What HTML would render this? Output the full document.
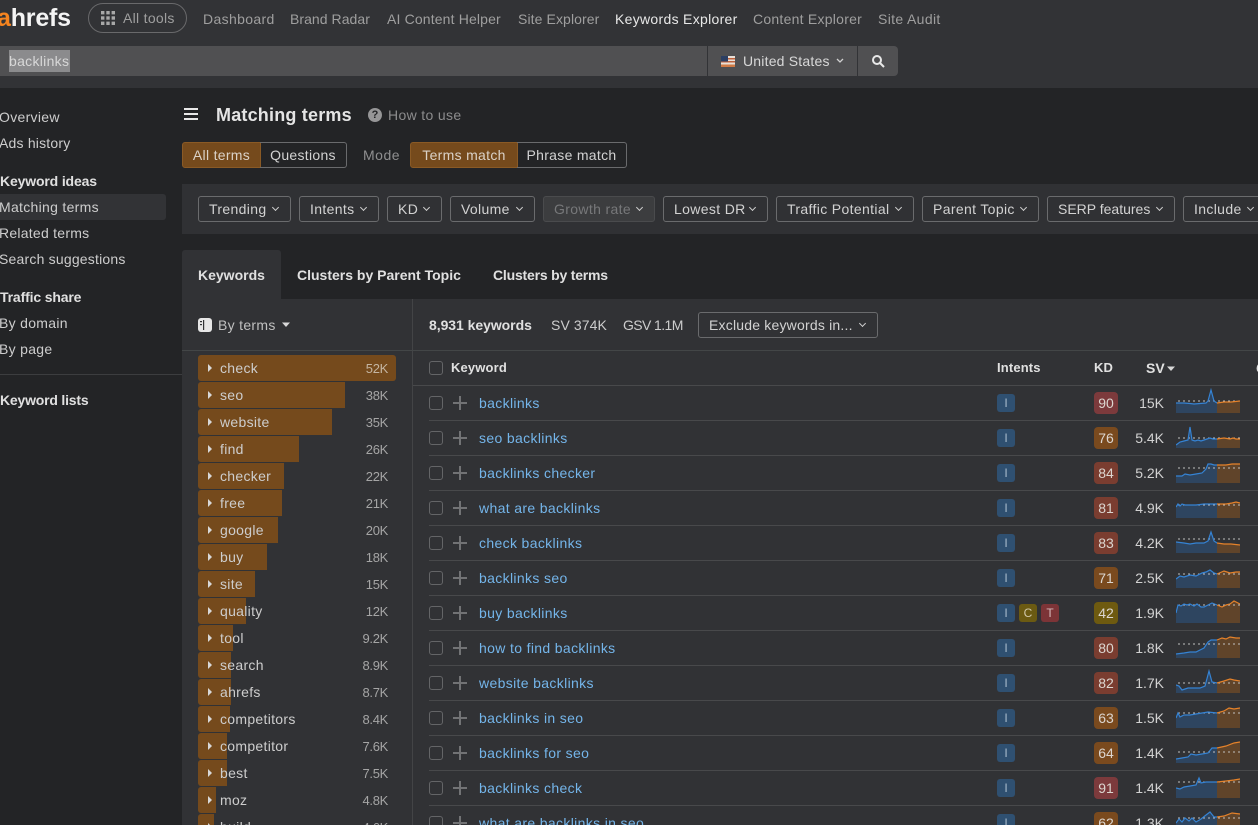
<!DOCTYPE html>
<html><head><meta charset="utf-8"><style>
html,body{margin:0;padding:0;background:#232426}
#p{position:relative;width:1258px;height:825px;overflow:hidden;background:#232426;font:14px/20px "Liberation Sans",sans-serif;letter-spacing:.3px;color:#cdcdcd}
#p div,#p svg,#p span.a{position:absolute}
.t{white-space:nowrap;height:20px}
.g{color:#9f9f9f}
.b{font-weight:700;color:#e0e0e0;letter-spacing:0}
.sb{letter-spacing:-.15px}
.h{font-size:13px;letter-spacing:.15px}
.btn{box-sizing:border-box;height:26px;top:196px;border:1px solid #6a6b6d;border-radius:3px;white-space:nowrap;padding-left:10px;line-height:24px;color:#d2d2d2;letter-spacing:.35px}
.btn:after{content:"";position:absolute;right:12px;top:8px;width:4px;height:4px;border-right:1.3px solid #cfcfcf;border-bottom:1.3px solid #cfcfcf;transform:rotate(45deg)}
.seg{box-sizing:border-box;height:26px;top:142px;border:1px solid #6a6b6d;line-height:24px;text-align:center;color:#d2d2d2}
.on{background:#754a1c;border-color:#8a5a25;color:#dad2c8}
.bar{left:198px;height:26px;background:#754a1c;border-radius:3px 0 0 3px}
.tri{left:208px;width:0;height:0;border-left:4px solid #d8d8d8;border-top:4px solid transparent;border-bottom:4px solid transparent}
.v{left:340px;width:48px;text-align:right;color:#a5a5a5;font-size:13px;letter-spacing:-.3px}
.line{left:429px;right:0;height:1px;background:#48494b}
.cb{left:429px;width:12px;height:12px;border:1.5px solid #646567;border-radius:3px}
.pl{left:453px;width:14px;height:14px;fill:#727375}
.lk{left:479px;color:#74b5ea;letter-spacing:.35px}
.ib{width:18px;height:18px;border-radius:3px;background:#2f5071;color:#a9bccd;text-align:center;line-height:18px;font-size:12px;letter-spacing:0}
.kd{left:1094px;width:24px;height:22px;border-radius:4px;text-align:center;line-height:22px;color:#dcd6d0;letter-spacing:0}
.sv{left:1110px;width:54px;text-align:right;color:#d2d2d2;letter-spacing:0}
.sp{left:1176px;width:64px;height:35px}
.r{background:#7c3a3c}.ro{background:#7a3d30}.o{background:#7a4a1e}.y{background:#6e5a10}
.sp path:nth-child(1){fill:#2e4560}
.sp path:nth-child(2){fill:#60442a}
</style></head><body><div id="p">

<div style="left:0;top:0;width:1258px;height:88px;background:#323336"></div>
<div class="t" style="left:-3px;top:4px;height:28px;font:700 25px/28px 'Liberation Sans',sans-serif;letter-spacing:-.2px;color:#f4f4f4"><span style="color:#f5841f">a</span>hrefs</div>
<div style="left:88px;top:3px;width:97px;height:28px;border:1px solid #69696b;border-radius:15px"></div>
<svg style="left:101px;top:11px" width="14" height="14" fill="#a8a8a8"><rect x="0" y="0" width="3.4" height="3.4"/><rect x="5.3" y="0" width="3.4" height="3.4"/><rect x="10.6" y="0" width="3.4" height="3.4"/><rect x="0" y="5.3" width="3.4" height="3.4"/><rect x="5.3" y="5.3" width="3.4" height="3.4"/><rect x="10.6" y="5.3" width="3.4" height="3.4"/><rect x="0" y="10.6" width="3.4" height="3.4"/><rect x="5.3" y="10.6" width="3.4" height="3.4"/><rect x="10.6" y="10.6" width="3.4" height="3.4"/></svg>
<div class="t g" style="left:123px;top:8px">All tools</div>
<div class="t g" style="left:203px;top:9px;letter-spacing:.35px">Dashboard</div>
<div class="t g" style="left:290px;top:9px;letter-spacing:.05px">Brand Radar</div>
<div class="t g" style="left:387px;top:9px;letter-spacing:.15px">AI Content Helper</div>
<div class="t g" style="left:518px;top:9px;letter-spacing:.1px">Site Explorer</div>
<div class="t" style="left:615px;top:9px;color:#e8e8e8;letter-spacing:.3px">Keywords Explorer</div>
<div class="t g" style="left:753px;top:9px;letter-spacing:.25px">Content Explorer</div>
<div class="t g" style="left:878px;top:9px;letter-spacing:.35px">Site Audit</div>

<div style="left:0;top:46px;width:707px;height:30px;background:#505052"></div>
<div style="left:708px;top:46px;width:149px;height:30px;background:#505052"></div>
<div style="left:858px;top:46px;width:40px;height:30px;background:#505052;border-radius:0 4px 4px 0"></div>
<div style="left:9px;top:50px;width:61px;height:22px;background:#8b8b8d"></div>
<div class="t" style="left:9px;top:51px;color:#d8d8d8;letter-spacing:.3px">backlinks</div>
<svg style="left:721px;top:56px" width="14" height="11"><rect width="14" height="11" fill="#e8e0d8"/><rect y="2" width="14" height="1.5" fill="#c0623c"/><rect y="5" width="14" height="1.5" fill="#c0623c"/><rect y="8.5" width="14" height="2.5" fill="#d07a45"/><rect width="7" height="5.5" fill="#2c3f63"/></svg>
<div class="t" style="left:743px;top:51px;color:#d8d8d8;letter-spacing:.2px">United States</div>
<svg style="left:835px;top:57px" width="10" height="8" fill="none" stroke="#d0d0d0" stroke-width="1.3"><path d="M2 2l3 3 3-3"/></svg>
<svg style="left:871px;top:54px" width="14" height="14" fill="none" stroke="#e8e8e8" stroke-width="2"><circle cx="6" cy="6" r="4"/><path d="M9 9l4 4"/></svg>

<div class="t" style="left:-1px;top:107px">Overview</div>
<div class="t" style="left:-1px;top:133px;letter-spacing:.2px">Ads history</div>
<div class="t b sb" style="left:0;top:171px">Keyword ideas</div>
<div style="left:0;top:194px;width:166px;height:26px;background:#323336;border-radius:0 3px 3px 0"></div>
<div class="t" style="left:-1px;top:197px">Matching terms</div>
<div class="t" style="left:-1px;top:223px;letter-spacing:.25px">Related terms</div>
<div class="t" style="left:-1px;top:249px;letter-spacing:.2px">Search suggestions</div>
<div class="t b sb" style="left:0;top:287px">Traffic share</div>
<div class="t" style="left:-1px;top:313px">By domain</div>
<div class="t" style="left:-1px;top:339px">By page</div>
<div style="left:0;top:374px;width:182px;height:1px;background:#3c3d3f"></div>
<div class="t b" style="left:0;top:390px;letter-spacing:-.2px">Keyword lists</div>

<svg style="left:184px;top:108px" width="14" height="12" fill="#e8e8e8"><rect width="14" height="2" y="0"/><rect width="14" height="2" y="5"/><rect width="14" height="2" y="10"/></svg>
<div class="t" style="left:216px;top:104px;height:22px;font:700 18px/22px 'Liberation Sans',sans-serif;letter-spacing:.2px;color:#e4e4e4">Matching terms</div>
<div style="left:368px;top:108px;width:14px;height:14px;border-radius:50%;background:#969697;color:#232426;font:700 11px/14px 'Liberation Sans',sans-serif;text-align:center;letter-spacing:0">?</div>
<div class="t" style="left:388px;top:105px;color:#8c8c8d;letter-spacing:.35px">How to use</div>

<div class="seg on" style="left:182px;width:79px;border-radius:3px 0 0 3px">All terms</div>
<div class="seg" style="left:260px;width:87px;border-radius:0 3px 3px 0;border-left:0">Questions</div>
<div class="t" style="left:363px;top:145px;color:#8f8f90;letter-spacing:.5px">Mode</div>
<div class="seg on" style="left:410px;width:108px;border-radius:3px 0 0 3px">Terms match</div>
<div class="seg" style="left:517px;width:110px;border-radius:0 3px 3px 0;border-left:0">Phrase match</div>

<div style="left:182px;top:184px;width:1076px;height:50px;background:#303134"></div>
<div class="btn" style="left:198px;width:93px">Trending</div>
<div class="btn" style="left:299px;width:80px">Intents</div>
<div class="btn" style="left:387px;width:55px">KD</div>
<div class="btn" style="left:450px;width:85px">Volume</div>
<div class="btn" style="left:543px;width:112px;background:#3c3d3f;border-color:#4a4b4d;color:#77787a">Growth rate</div>
<div class="btn" style="left:663px;width:105px">Lowest DR</div>
<div class="btn" style="left:776px;width:138px">Traffic Potential</div>
<div class="btn" style="left:922px;width:117px">Parent Topic</div>
<div class="btn" style="left:1047px;width:128px;letter-spacing:0">SERP features</div>
<div class="btn" style="left:1183px;width:83px">Include</div>

<div style="left:182px;top:250px;width:99px;height:49px;background:#313235;border-radius:3px 3px 0 0"></div>
<div style="left:182px;top:299px;width:1076px;height:526px;background:#313235"></div>
<div class="t b" style="left:198px;top:265px">Keywords</div>
<div class="t b" style="left:297px;top:265px">Clusters by Parent Topic</div>
<div class="t b" style="left:493px;top:265px;letter-spacing:-.2px">Clusters by terms</div>
<div style="left:412px;top:299px;width:1px;height:526px;background:#434446"></div>
<div style="left:182px;top:350px;width:1076px;height:1px;background:#434647"></div>

<svg style="left:198px;top:318px" width="14" height="14"><rect width="14" height="14" rx="3" fill="#e6e6e6"/><rect x="5" y="2" width="1.2" height="10" fill="#313235"/><rect x="2" y="3" width="2" height="1.2" fill="#313235"/><rect x="2" y="6" width="2" height="1.2" fill="#313235"/></svg>
<div class="t" style="left:218px;top:315px;color:#c0c0c0">By terms</div>
<svg style="left:282px;top:322px" width="8" height="6" fill="#d8d8d8"><path d="M0 .5h8L4 5z"/></svg>

<div class="t b" style="left:429px;top:315px;letter-spacing:-.05px">8,931 keywords</div>
<div class="t" style="left:551px;top:315px;letter-spacing:.1px">SV 374K</div>
<div class="t" style="left:623px;top:315px;letter-spacing:-.6px">GSV 1.1M</div>
<div class="btn" style="left:698px;top:312px;width:180px;padding-left:10px;letter-spacing:.2px">Exclude keywords in...</div>

<div class="cb" style="top:361px"></div>
<div class="t b h" style="left:451px;top:358px">Keyword</div>
<div class="t b h" style="left:997px;top:358px">Intents</div>
<div class="t b h" style="left:1094px;top:358px">KD</div>
<div class="t b" style="left:1146px;top:358px">SV</div>
<svg style="left:1167px;top:366px" width="8" height="6" fill="#d8d8d8"><path d="M0 .5h8L4 5z"/></svg>
<div class="t b" style="left:1256px;top:358px">C</div>
<div style="left:413px;top:385px;width:845px;height:1px;background:#48494b"></div>

<!-- terms -->
<div class="bar" style="top:355px;width:198px;border-radius:3px"></div>
<div class="bar" style="top:382px;width:147px"></div>
<div class="bar" style="top:409px;width:134px"></div>
<div class="bar" style="top:436px;width:101px"></div>
<div class="bar" style="top:463px;width:86px"></div>
<div class="bar" style="top:490px;width:84px"></div>
<div class="bar" style="top:517px;width:80px"></div>
<div class="bar" style="top:544px;width:69px"></div>
<div class="bar" style="top:571px;width:57px"></div>
<div class="bar" style="top:598px;width:48px"></div>
<div class="bar" style="top:625px;width:35px"></div>
<div class="bar" style="top:652px;width:33px"></div>
<div class="bar" style="top:679px;width:33px"></div>
<div class="bar" style="top:706px;width:32px"></div>
<div class="bar" style="top:733px;width:29px"></div>
<div class="bar" style="top:760px;width:29px"></div>
<div class="bar" style="top:787px;width:18px"></div>
<div class="bar" style="top:814px;width:16px"></div>
<div class="tri" style="top:364px"></div><div class="t" style="left:220px;top:358px">check</div><div class="t v" style="top:359px;color:#c4b5a2">52K</div>
<div class="tri" style="top:391px"></div><div class="t" style="left:220px;top:385px">seo</div><div class="t v" style="top:386px">38K</div>
<div class="tri" style="top:418px"></div><div class="t" style="left:220px;top:412px">website</div><div class="t v" style="top:413px">35K</div>
<div class="tri" style="top:445px"></div><div class="t" style="left:220px;top:439px">find</div><div class="t v" style="top:440px">26K</div>
<div class="tri" style="top:472px"></div><div class="t" style="left:220px;top:466px">checker</div><div class="t v" style="top:467px">22K</div>
<div class="tri" style="top:499px"></div><div class="t" style="left:220px;top:493px">free</div><div class="t v" style="top:494px">21K</div>
<div class="tri" style="top:526px"></div><div class="t" style="left:220px;top:520px">google</div><div class="t v" style="top:521px">20K</div>
<div class="tri" style="top:553px"></div><div class="t" style="left:220px;top:547px">buy</div><div class="t v" style="top:548px">18K</div>
<div class="tri" style="top:580px"></div><div class="t" style="left:220px;top:574px">site</div><div class="t v" style="top:575px">15K</div>
<div class="tri" style="top:607px"></div><div class="t" style="left:220px;top:601px">quality</div><div class="t v" style="top:602px">12K</div>
<div class="tri" style="top:634px"></div><div class="t" style="left:220px;top:628px">tool</div><div class="t v" style="top:629px">9.2K</div>
<div class="tri" style="top:661px"></div><div class="t" style="left:220px;top:655px">search</div><div class="t v" style="top:656px">8.9K</div>
<div class="tri" style="top:688px"></div><div class="t" style="left:220px;top:682px">ahrefs</div><div class="t v" style="top:683px">8.7K</div>
<div class="tri" style="top:715px"></div><div class="t" style="left:220px;top:709px">competitors</div><div class="t v" style="top:710px">8.4K</div>
<div class="tri" style="top:742px"></div><div class="t" style="left:220px;top:736px">competitor</div><div class="t v" style="top:737px">7.6K</div>
<div class="tri" style="top:769px"></div><div class="t" style="left:220px;top:763px">best</div><div class="t v" style="top:764px">7.5K</div>
<div class="tri" style="top:796px"></div><div class="t" style="left:220px;top:790px">moz</div><div class="t v" style="top:791px">4.8K</div>
<div class="tri" style="top:823px"></div><div class="t" style="left:220px;top:817px">build</div><div class="t v" style="top:818px">4.6K</div>

<!-- rows -->
<div class="line" style="top:420px"></div><div class="line" style="top:455px"></div><div class="line" style="top:490px"></div><div class="line" style="top:525px"></div><div class="line" style="top:560px"></div><div class="line" style="top:595px"></div><div class="line" style="top:630px"></div><div class="line" style="top:665px"></div><div class="line" style="top:700px"></div><div class="line" style="top:735px"></div><div class="line" style="top:770px"></div><div class="line" style="top:805px"></div>

<div class="cb" style="top:396px"></div><svg class="pl" style="top:396px"><path d="M6 0h2v6h6v2H8v6H6V8H0V6h6z"/></svg><div class="t lk" style="top:393px">backlinks</div><div class="ib" style="left:997px;top:394px">I</div><div class="kd r" style="top:392px">90</div><div class="t sv" style="top:393px">15K</div>
<svg class="sp" style="top:385px"><path d="M0 28V18L8 18 14 18.500 18 19 24 18.500 30 18 32 16 35 5 38 16 41 18V28Z"/><path d="M41 28V18L48 17 55 17 64 16V28Z"/><path d="M2 16H64" stroke="#c0c0c0" stroke-dasharray="2 3" fill="none"/><path d="M0 18L8 18 14 18.500 18 19 24 18.500 30 18 32 16 35 5 38 16 41 18" fill="none" stroke="#3583d4" stroke-width="1.2"/><path d="M41 18L48 17 55 17 64 16" fill="none" stroke="#e5822a" stroke-width="1.2"/></svg>

<div class="cb" style="top:431px"></div><svg class="pl" style="top:431px"><path d="M6 0h2v6h6v2H8v6H6V8H0V6h6z"/></svg><div class="t lk" style="top:428px">seo backlinks</div><div class="ib" style="left:997px;top:429px">I</div><div class="kd o" style="top:427px">76</div><div class="t sv" style="top:428px">5.4K</div>
<svg class="sp" style="top:420px"><path d="M0 28V25L4 22 8 21 12 20 14 7 16 20 19 21 22 20 25 21 28 20 31 19 34 18 37 19 41 19V28Z"/><path d="M41 28V19L48 18 54 19 57 18 60 19 64 19V28Z"/><path d="M2 18H64" stroke="#c0c0c0" stroke-dasharray="2 3" fill="none"/><path d="M0 25L4 22 8 21 12 20 14 7 16 20 19 21 22 20 25 21 28 20 31 19 34 18 37 19 41 19" fill="none" stroke="#3583d4" stroke-width="1.2"/><path d="M41 19L48 18 54 19 57 18 60 19 64 19" fill="none" stroke="#e5822a" stroke-width="1.2"/></svg>

<div class="cb" style="top:466px"></div><svg class="pl" style="top:466px"><path d="M6 0h2v6h6v2H8v6H6V8H0V6h6z"/></svg><div class="t lk" style="top:463px">backlinks checker</div><div class="ib" style="left:997px;top:464px">I</div><div class="kd ro" style="top:462px">84</div><div class="t sv" style="top:463px">5.2K</div>
<svg class="sp" style="top:455px"><path d="M0 28V21L6 21 9 19 14 20 20 19 26 18 30 14 32 9 35 9 38 10 41 10V28Z"/><path d="M41 28V10L50 10 56 9 64 9V28Z"/><path d="M2 13H64" stroke="#c0c0c0" stroke-dasharray="2 3" fill="none"/><path d="M0 21L6 21 9 19 14 20 20 19 26 18 30 14 32 9 35 9 38 10 41 10" fill="none" stroke="#3583d4" stroke-width="1.2"/><path d="M41 10L50 10 56 9 64 9" fill="none" stroke="#e5822a" stroke-width="1.2"/></svg>

<div class="cb" style="top:501px"></div><svg class="pl" style="top:501px"><path d="M6 0h2v6h6v2H8v6H6V8H0V6h6z"/></svg><div class="t lk" style="top:498px">what are backlinks</div><div class="ib" style="left:997px;top:499px">I</div><div class="kd ro" style="top:497px">81</div><div class="t sv" style="top:498px">4.9K</div>
<svg class="sp" style="top:490px"><path d="M0 28V17L2 14 4 16 6 14 9 15 14 15 20 15 28 14 34 14 41 14V28Z"/><path d="M41 28V14L50 14 56 13 60 12 64 13V28Z"/><path d="M2 15H64" stroke="#c0c0c0" stroke-dasharray="2 3" fill="none"/><path d="M0 17L2 14 4 16 6 14 9 15 14 15 20 15 28 14 34 14 41 14" fill="none" stroke="#3583d4" stroke-width="1.2"/><path d="M41 14L50 14 56 13 60 12 64 13" fill="none" stroke="#e5822a" stroke-width="1.2"/></svg>

<div class="cb" style="top:536px"></div><svg class="pl" style="top:536px"><path d="M6 0h2v6h6v2H8v6H6V8H0V6h6z"/></svg><div class="t lk" style="top:533px">check backlinks</div><div class="ib" style="left:997px;top:534px">I</div><div class="kd ro" style="top:532px">83</div><div class="t sv" style="top:533px">4.2K</div>
<svg class="sp" style="top:525px"><path d="M0 28V17L8 18 14 19 20 18 28 18 32 16 35 7 38 16 41 18V28Z"/><path d="M41 28V18L48 19 55 19 64 20V28Z"/><path d="M2 14H64" stroke="#c0c0c0" stroke-dasharray="2 3" fill="none"/><path d="M0 17L8 18 14 19 20 18 28 18 32 16 35 7 38 16 41 18" fill="none" stroke="#3583d4" stroke-width="1.2"/><path d="M41 18L48 19 55 19 64 20" fill="none" stroke="#e5822a" stroke-width="1.2"/></svg>

<div class="cb" style="top:571px"></div><svg class="pl" style="top:571px"><path d="M6 0h2v6h6v2H8v6H6V8H0V6h6z"/></svg><div class="t lk" style="top:568px">backlinks seo</div><div class="ib" style="left:997px;top:569px">I</div><div class="kd o" style="top:567px">71</div><div class="t sv" style="top:568px">2.5K</div>
<svg class="sp" style="top:560px"><path d="M0 28V19L4 16 8 17 14 15 20 16 26 13 30 12 34 10 38 13 41 14V28Z"/><path d="M41 28V14L48 11 54 13 60 12 64 12V28Z"/><path d="M2 14H64" stroke="#c0c0c0" stroke-dasharray="2 3" fill="none"/><path d="M0 19L4 16 8 17 14 15 20 16 26 13 30 12 34 10 38 13 41 14" fill="none" stroke="#3583d4" stroke-width="1.2"/><path d="M41 14L48 11 54 13 60 12 64 12" fill="none" stroke="#e5822a" stroke-width="1.2"/></svg>

<div class="cb" style="top:606px"></div><svg class="pl" style="top:606px"><path d="M6 0h2v6h6v2H8v6H6V8H0V6h6z"/></svg><div class="t lk" style="top:603px">buy backlinks</div><div class="ib" style="left:997px;top:604px">I</div><div class="ib" style="left:1019px;top:604px;background:#6b5a12;color:#cfc7a8">C</div><div class="ib" style="left:1041px;top:604px;background:#7c3437;color:#d5b9ba">T</div><div class="kd y" style="top:602px">42</div><div class="t sv" style="top:603px">1.9K</div>
<svg class="sp" style="top:595px"><path d="M0 28V18L2 10 5 11 8 9 11 10 14 9 18 11 21 9 25 12 28 12 32 10 36 8 41 10V28Z"/><path d="M41 28V10L46 12 50 10 54 9 58 6 62 8 64 9V28Z"/><path d="M2 10H64" stroke="#c0c0c0" stroke-dasharray="2 3" fill="none"/><path d="M0 18L2 10 5 11 8 9 11 10 14 9 18 11 21 9 25 12 28 12 32 10 36 8 41 10" fill="none" stroke="#3583d4" stroke-width="1.2"/><path d="M41 10L46 12 50 10 54 9 58 6 62 8 64 9" fill="none" stroke="#e5822a" stroke-width="1.2"/></svg>

<div class="cb" style="top:641px"></div><svg class="pl" style="top:641px"><path d="M6 0h2v6h6v2H8v6H6V8H0V6h6z"/></svg><div class="t lk" style="top:638px">how to find backlinks</div><div class="ib" style="left:997px;top:639px">I</div><div class="kd ro" style="top:637px">80</div><div class="t sv" style="top:638px">1.8K</div>
<svg class="sp" style="top:630px"><path d="M0 28V24L8 23 14 22 20 22 24 20 28 18 32 12 35 10 41 10V28Z"/><path d="M41 28V10L46 8 50 9 54 7 60 8 64 8V28Z"/><path d="M2 14H64" stroke="#c0c0c0" stroke-dasharray="2 3" fill="none"/><path d="M0 24L8 23 14 22 20 22 24 20 28 18 32 12 35 10 41 10" fill="none" stroke="#3583d4" stroke-width="1.2"/><path d="M41 10L46 8 50 9 54 7 60 8 64 8" fill="none" stroke="#e5822a" stroke-width="1.2"/></svg>

<div class="cb" style="top:676px"></div><svg class="pl" style="top:676px"><path d="M6 0h2v6h6v2H8v6H6V8H0V6h6z"/></svg><div class="t lk" style="top:673px">website backlinks</div><div class="ib" style="left:997px;top:674px">I</div><div class="kd ro" style="top:672px">82</div><div class="t sv" style="top:673px">1.7K</div>
<svg class="sp" style="top:665px"><path d="M0 28V20L3 21 6 25 12 23 18 23 24 23 29 21 33 6 36 17 41 18V28Z"/><path d="M41 28V18L48 16 54 14 58 15 64 16V28Z"/><path d="M2 18H64" stroke="#c0c0c0" stroke-dasharray="2 3" fill="none"/><path d="M0 20L3 21 6 25 12 23 18 23 24 23 29 21 33 6 36 17 41 18" fill="none" stroke="#3583d4" stroke-width="1.2"/><path d="M41 18L48 16 54 14 58 15 64 16" fill="none" stroke="#e5822a" stroke-width="1.2"/></svg>

<div class="cb" style="top:711px"></div><svg class="pl" style="top:711px"><path d="M6 0h2v6h6v2H8v6H6V8H0V6h6z"/></svg><div class="t lk" style="top:708px">backlinks in seo</div><div class="ib" style="left:997px;top:709px">I</div><div class="kd o" style="top:707px">63</div><div class="t sv" style="top:708px">1.5K</div>
<svg class="sp" style="top:700px"><path d="M0 28V18L2 13 4 17 8 15 14 15 20 14 26 13 32 12 41 13V28Z"/><path d="M41 28V13L48 11 53 8 58 9 64 8V28Z"/><path d="M2 13H64" stroke="#c0c0c0" stroke-dasharray="2 3" fill="none"/><path d="M0 18L2 13 4 17 8 15 14 15 20 14 26 13 32 12 41 13" fill="none" stroke="#3583d4" stroke-width="1.2"/><path d="M41 13L48 11 53 8 58 9 64 8" fill="none" stroke="#e5822a" stroke-width="1.2"/></svg>

<div class="cb" style="top:746px"></div><svg class="pl" style="top:746px"><path d="M6 0h2v6h6v2H8v6H6V8H0V6h6z"/></svg><div class="t lk" style="top:743px">backlinks for seo</div><div class="ib" style="left:997px;top:744px">I</div><div class="kd o" style="top:742px">64</div><div class="t sv" style="top:743px">1.4K</div>
<svg class="sp" style="top:735px"><path d="M0 28V24L6 23 12 22 15 19 20 20 26 19 32 18 36 13 41 13V28Z"/><path d="M41 28V13L50 11 58 8 64 7V28Z"/><path d="M2 17H64" stroke="#c0c0c0" stroke-dasharray="2 3" fill="none"/><path d="M0 24L6 23 12 22 15 19 20 20 26 19 32 18 36 13 41 13" fill="none" stroke="#3583d4" stroke-width="1.2"/><path d="M41 13L50 11 58 8 64 7" fill="none" stroke="#e5822a" stroke-width="1.2"/></svg>

<div class="cb" style="top:781px"></div><svg class="pl" style="top:781px"><path d="M6 0h2v6h6v2H8v6H6V8H0V6h6z"/></svg><div class="t lk" style="top:778px">backlinks check</div><div class="ib" style="left:997px;top:779px">I</div><div class="kd r" style="top:777px">91</div><div class="t sv" style="top:778px">1.4K</div>
<svg class="sp" style="top:770px"><path d="M0 28V18L4 19 8 17 14 16 20 15 23 8 25 13 30 12 41 12V28Z"/><path d="M41 28V12L50 11 58 10 64 9V28Z"/><path d="M2 12H64" stroke="#c0c0c0" stroke-dasharray="2 3" fill="none"/><path d="M0 18L4 19 8 17 14 16 20 15 23 8 25 13 30 12 41 12" fill="none" stroke="#3583d4" stroke-width="1.2"/><path d="M41 12L50 11 58 10 64 9" fill="none" stroke="#e5822a" stroke-width="1.2"/></svg>

<div class="cb" style="top:816px"></div><svg class="pl" style="top:816px"><path d="M6 0h2v6h6v2H8v6H6V8H0V6h6z"/></svg><div class="t lk" style="top:813px">what are backlinks in seo</div><div class="ib" style="left:997px;top:814px">I</div><div class="kd o" style="top:812px">62</div><div class="t sv" style="top:813px">1.3K</div>
<svg class="sp" style="top:805px"><path d="M0 28V18L3 14 6 17 9 13 13 16 16 13 20 17 25 14 30 10 34 7 38 12 41 12V28Z"/><path d="M41 28V12L48 11 56 8 64 9V28Z"/><path d="M2 13H64" stroke="#c0c0c0" stroke-dasharray="2 3" fill="none"/><path d="M0 18L3 14 6 17 9 13 13 16 16 13 20 17 25 14 30 10 34 7 38 12 41 12" fill="none" stroke="#3583d4" stroke-width="1.2"/><path d="M41 12L48 11 56 8 64 9" fill="none" stroke="#e5822a" stroke-width="1.2"/></svg>

</div></body></html>
